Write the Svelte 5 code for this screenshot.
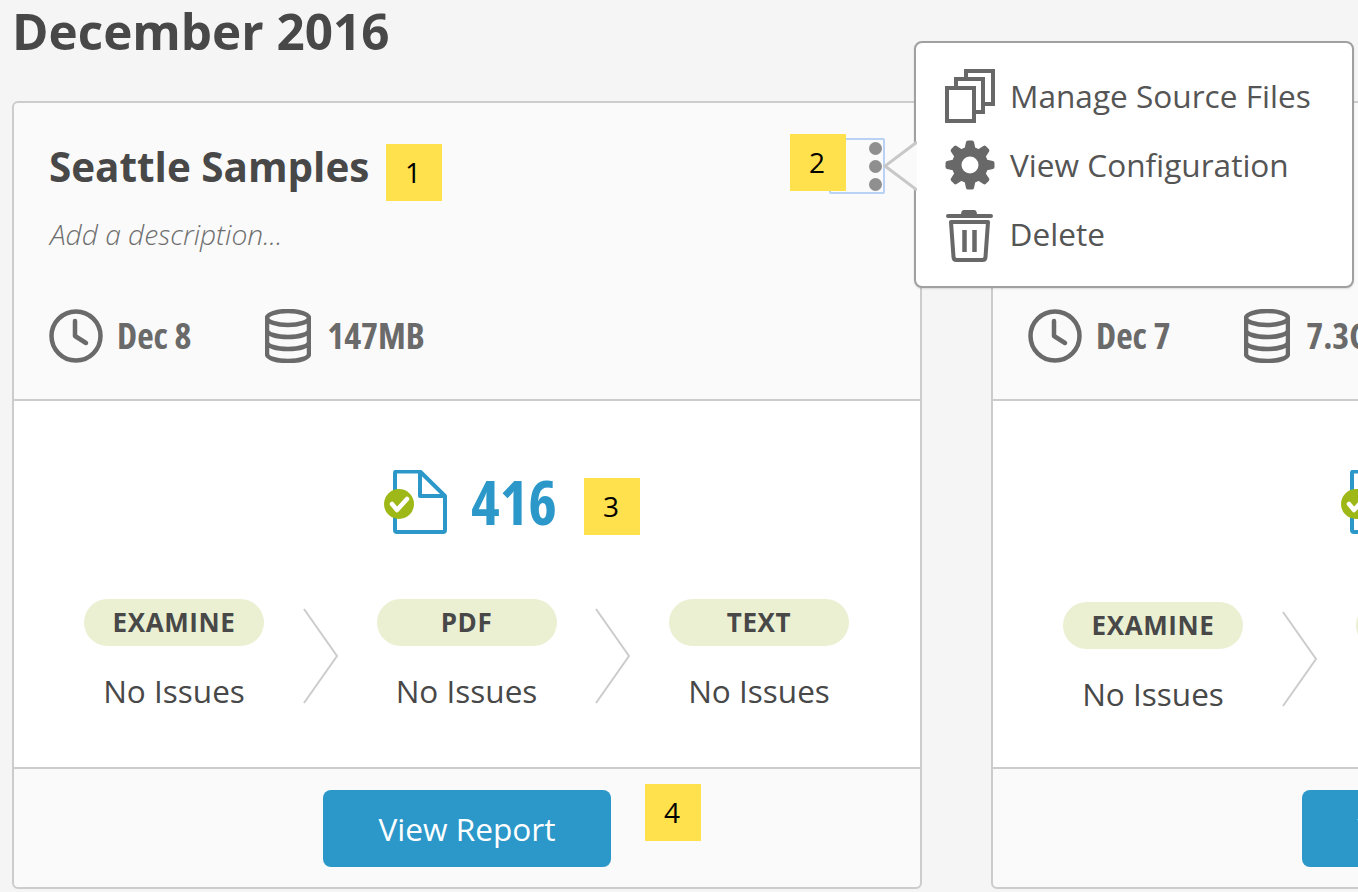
<script>
  const cards = [
    { title: 'Seattle Samples', date: 'Dec 8', size: '147MB', count: '416', offset: false, steps: ['EXAMINE', 'PDF', 'TEXT'] },
    { title: 'Portland Samples', date: 'Dec 7', size: '7.3GB', count: '1,024', offset: true, steps: ['EXAMINE', 'PDF', 'TEXT'] }
  ];
  const teeth = [0, 45, 90, 135, 180, 225, 270, 315];
</script>

<div class="page">
  <h1>December 2016</h1>
  <div class="cards">
    {#each cards as c, ci}
      <section class="card" class:second={c.offset}>
        <div class="head">
          {#if !c.offset}
            <div class="title-row">
              <h2>{c.title}</h2>
              <button class="dots" aria-label="More"><i></i><i></i><i></i></button>
            </div>
            <p class="desc">Add a description...</p>
          {:else}
            <div class="title-row blank"></div>
            <p class="desc blank"></p>
          {/if}
          <div class="meta">
            <span class="meta-item date">
              <svg class="ico" viewBox="0 0 54 54" width="54" height="54" fill="none" stroke="#6a6a6a" stroke-width="4.500">
                <circle cx="27" cy="27" r="24.500" />
                <path d="M26 12v15l11 7" stroke-linecap="round" stroke-linejoin="round" />
              </svg>
              <b>{c.date}</b>
            </span>
            <span class="meta-item">
              <svg class="ico" viewBox="0 0 46 54" width="46" height="54" fill="none" stroke="#6a6a6a" stroke-width="4.500">
                <ellipse cx="23" cy="9" rx="21" ry="7" />
                <path d="M2 9v36c0 4 9 7 21 7s21-3 21-7V9M2 21c0 4 9 7 21 7s21-3 21-7M2 33c0 4 9 7 21 7s21-3 21-7" />
              </svg>
              <b>{c.size}</b>
            </span>
          </div>
        </div>
        <div class="body">
          <div class="count">
            <svg viewBox="0 0 66 64" width="66" height="64" fill="none">
              <path d="M11 35V3q0-1.500 1.500-1.500H36L61 26v34q0 2-2 2H13q-2 0-2-2V47" stroke="#2b98c9" stroke-width="4" stroke-linejoin="round" />
              <path d="M36 2v24h25" stroke="#2b98c9" stroke-width="4" stroke-linejoin="round" />
              <circle cx="15" cy="34" r="15" fill="#9db817" />
              <path d="M8 34l5 6 10-11" stroke="#fff" stroke-width="4.500" stroke-linecap="round" stroke-linejoin="round" />
            </svg>
            <strong>{c.count}</strong>
          </div>
          <div class="steps">
            {#each c.steps as s, i}
              <div class="step">
                <span class="pill">{s}</span>
                <span class="issue">No Issues</span>
              </div>
              {#if i < c.steps.length - 1}
                <svg class="chev" viewBox="0 0 36 96" width="36" height="96" fill="none" stroke="#cccccc" stroke-width="2">
                  <path d="M1 1l33 47L1 95" />
                </svg>
              {/if}
            {/each}
          </div>
        </div>
        <div class="foot">
          <button class="report">View Report</button>
        </div>
      </section>
    {/each}
  </div>

  <div class="note n1">1</div>
  <div class="note n2">2</div>
  <div class="note n3">3</div>
  <div class="note n4">4</div>

  <div class="pop">
    <svg class="tail" viewBox="0 0 34 50" width="34" height="50">
      <path d="M34 1L2 25l32 24" fill="#fafafa" stroke="#c8c8c8" stroke-width="3" />
    </svg>
    <div class="pop-item">
      <svg viewBox="0 0 50 54" width="50" height="54" fill="none" stroke="#686868" stroke-width="4">
        <rect x="21" y="2" width="27" height="33" fill="#fff" />
        <rect x="11" y="10" width="27" height="33" fill="#fff" />
        <rect x="2" y="19" width="27" height="33" fill="#fff" />
      </svg>
      <span>Manage Source Files</span>
    </div>
    <div class="pop-item">
      <svg viewBox="0 0 50 50" width="50" height="50">
        <circle cx="25" cy="25" r="18" fill="#686868" />
        {#each teeth as t}
          <path d="M19.500 9L21 2q.4-1.500 2-1.500h4q1.600 0 2 1.500l1.500 7z" fill="#686868" transform="rotate({t} 25 25)" />
        {/each}
        <circle cx="25" cy="25" r="8.500" fill="#fff" />
      </svg>
      <span>View Configuration</span>
    </div>
    <div class="pop-item trash">
      <svg viewBox="0 0 50 54" width="50" height="54" fill="none" stroke="#686868">
        <path d="M3 8h43" stroke-width="4" stroke-linecap="round" />
        <path d="M16 7q0-5 3-5h10q3 0 3 5z" fill="#686868" stroke="none" />
        <path d="M6 14l2.500 35q.2 3 3 3h26q2.800 0 3-3L43 14z" stroke-width="4" stroke-linejoin="round" />
        <path d="M19.500 22v22M29.500 22v22" stroke-width="4.500" />
      </svg>
      <span>Delete</span>
    </div>
  </div>
</div>

<style>
  :global(body) {
    margin: 0;
    background: #f5f5f5;
  }
  .page {
    position: relative;
    width: 1358px;
    height: 892px;
    overflow: hidden;
    padding-left: 12px;
    box-sizing: border-box;
    font-family: "Open Sans", "Liberation Sans", sans-serif;
    color: #484848;
  }
  h1 {
    margin: 0;
    height: 101px;
    font-size: 49.400px;
    line-height: 62px;
    font-weight: 700;
    color: #484848;
  }
  .cards {
    display: flex;
    gap: 69px;
    width: 1500px;
  }
  .card {
    flex: 0 0 auto;
    width: 910px;
    height: 788px;
    box-sizing: border-box;
    border: 2px solid #cccccc;
    border-radius: 6px;
    background: #fafafa;
    display: flex;
    flex-direction: column;
  }
  .head {
    height: 298px;
    box-sizing: border-box;
    padding: 0 36px 0 35px;
    border-bottom: 2px solid #cccccc;
    display: flex;
    flex-direction: column;
  }
  .title-row {
    display: flex;
    align-items: flex-start;
    justify-content: space-between;
    height: 113px;
  }
  .title-row h2 {
    margin: 39px 0 0;
    font-size: 40.400px;
    line-height: 50px;
    font-weight: 700;
  }
  .dots {
    margin: 35px -1px 0 0;
    width: 56px;
    height: 56px;
    box-sizing: border-box;
    padding: 2px 1px 0 0;
    background: transparent;
    border: 2px solid #b7d2f5;
    border-radius: 2px;
    display: flex;
    flex-direction: column;
    align-items: flex-end;
    gap: 5px;
  }
  .dots i {
    display: block;
    width: 13px;
    height: 13px;
    border-radius: 50%;
    background: #8f8f8f;
  }
  .desc {
    margin: 0 0 0 1px;
    height: 81px;
    font-size: 28.200px;
    line-height: 36px;
    font-style: italic;
    font-weight: 300;
    color: #6e6e6e;
  }
  .meta {
    margin-top: 12px;
    display: flex;
    align-items: center;
    gap: 74px;
  }
  .meta-item {
    display: flex;
    align-items: center;
    gap: 16px;
  }
  .meta-item.date { gap: 14px; }
  .meta-item b {
    display: inline-block;
    font-size: 36px;
    line-height: 54px;
    font-weight: 700;
    font-stretch: 75%;
    color: #6a6a6a;
  }
  .body {
    height: 366px;
    background: #fff;
    border-bottom: 2px solid #cccccc;
    display: flex;
    flex-direction: column;
    align-items: center;
  }
  .count {
    display: flex;
    align-items: center;
    gap: 21px;
    margin-top: 68px;
    margin-left: 7px;
    height: 66px;
  }
  .count strong {
    font-size: 61px;
    line-height: 66px;
    font-weight: 700;
    font-stretch: 75%;
    color: #2b98c9;
  }
  .steps {
    display: flex;
    align-items: flex-start;
    margin-top: 64px;
    margin-left: -1px;
  }
  .second .steps { margin-top: 67px; }
  .step {
    width: 180px;
    display: flex;
    flex-direction: column;
    align-items: center;
  }
  .pill {
    width: 180px;
    height: 47px;
    border-radius: 24px;
    background: #ebf0d3;
    font-size: 26px;
    line-height: 47px;
    font-weight: 700;
    text-align: center;
    letter-spacing: 0.6px;
  }
  .issue {
    margin-top: 21px;
    font-size: 31.500px;
    line-height: 48px;
    color: #484848;
  }
  .chev {
    margin: 9px 38px 0 38.500px;
    flex: none;
  }
  .foot {
    flex: 1;
    display: flex;
    align-items: center;
    justify-content: center;
  }
  .report {
    width: 288px;
    height: 77px;
    border: none;
    border-radius: 8px;
    background: #2b98c9;
    color: #fff;
    font-family: inherit;
    font-size: 31.600px;
  }
  .note {
    position: absolute;
    width: 56px;
    height: 57px;
    background: #ffe14d;
    color: #000;
    font-size: 28px;
    line-height: 57px;
    text-align: center;
    text-indent: -2px;
  }
  .n1 { left: 386px; top: 144px; }
  .n2 { left: 790px; top: 134px; }
  .n3 { left: 584px; top: 478px; }
  .n4 { left: 645px; top: 784px; }
  .pop {
    position: absolute;
    left: 914px;
    top: 41px;
    width: 440px;
    height: 247px;
    box-sizing: border-box;
    background: #fff;
    border: 2px solid #a0a0a0;
    border-radius: 8px;
    padding: 18px 0 0 29px;
    box-shadow: 0 1px 2px rgba(0, 0, 0, 0.12);
  }
  .tail {
    position: absolute;
    left: -33px;
    top: 98px;
  }
  .pop-item {
    display: flex;
    align-items: center;
    gap: 15px;
    height: 69px;
    font-size: 31.600px;
    color: #555;
  }
  .trash svg { margin-top: 2px; }
  .trash { gap: 14.500px; }
</style>
